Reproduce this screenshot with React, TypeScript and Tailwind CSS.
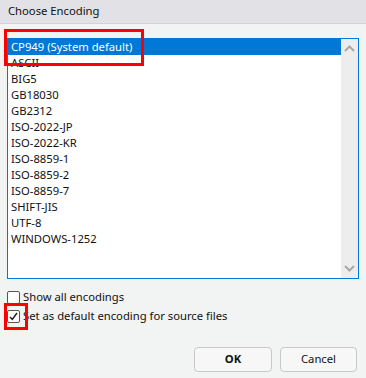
import React from 'react';

const ENCODINGS = [
    'CP949 (System default)',
    'ASCII',
    'BIG5',
    'GB18030',
    'GB2312',
    'ISO-2022-JP',
    'ISO-2022-KR',
    'ISO-8859-1',
    'ISO-8859-2',
    'ISO-8859-7',
    'SHIFT-JIS',
    'UTF-8',
    'WINDOWS-1252',
];

const Chevron: React.FC<{ up?: boolean }> = ({ up }) => (
    <svg width="11" height="7" viewBox="0 0 11 7" className={up ? '' : 'rotate-180'}>
        <path d="M1 6 L5.5 1.5 L10 6" fill="none" stroke="#a8a8a8" strokeWidth="2" />
    </svg>
);

const Checkbox: React.FC<{ checked?: boolean; label: string }> = ({ checked, label }) => (
    <div className="flex items-center h-[16px]">
        <div className="w-[13px] h-[13px] border border-[#555] rounded-[2px] bg-white flex items-center justify-center">
            {checked && (
                <svg width="11" height="11" viewBox="0 0 11 11">
                    <path d="M2 6 L4.3 8.5 L9 2" fill="none" stroke="#1a1a1a" strokeWidth="1.4" />
                </svg>
            )}
        </div>
        <span className="ml-[3px] text-[11.25px] text-[#111]">{label}</span>
    </div>
);

export default function App() {
    return (
        <div
            className="relative w-[366px] h-[378px] bg-[#f2f3f3] overflow-hidden"
            style={{ fontFamily: '"Noto Sans", "Open Sans", sans-serif' }}
        >
            <div className="h-[24px] bg-[#e1e1e6] border-b border-[#d4d4d8] flex items-center pl-[8px] text-[11.25px] text-[#111]">
                Choose Encoding
            </div>

            <div className="px-[7px] pt-[14px]">
                <div className="h-[241px] border border-[#0078d7] bg-white flex">
                    <div className="flex-1 flex flex-col">
                        {ENCODINGS.map((enc, i) => (
                            <div
                                key={enc}
                                className={`h-[16px] leading-[16px] pl-[3px] text-[11.25px] ${i === 0 ? 'bg-[#0078d7] text-white' : 'text-[#111]'}`}
                            >
                                {enc}
                            </div>
                        ))}
                    </div>
                    <div className="w-[17px] bg-[#ededed] flex flex-col justify-between items-center py-[6px]">
                        <Chevron up />
                        <Chevron />
                    </div>
                </div>

                <div className="mt-[10px] flex flex-col gap-[3px]">
                    <Checkbox label="Show all encodings" />
                    <Checkbox checked label="Set as default encoding for source files" />
                </div>

                <div className="mt-[23px] flex justify-end gap-[8px] pr-[2px]">
                    <button className="w-[78px] h-[25px] rounded-[4px] border border-[#c8c8c8] bg-[#f7f7f7] text-[11.25px] font-bold text-[#111]">
                        OK
                    </button>
                    <button className="w-[77px] h-[25px] rounded-[4px] border border-[#c8c8c8] bg-[#f7f7f7] text-[11.25px] text-[#111]">
                        Cancel
                    </button>
                </div>
            </div>

            {/* red annotation boxes */}
            <div className="absolute left-[4px] top-[29px] w-[140px] h-[37px] border-[3px] border-[#ff0000]" />
            <div className="absolute left-[4px] top-[303px] w-[24px] h-[27px] border-[3px] border-[#ff0000]" />
        </div>
    );
}
